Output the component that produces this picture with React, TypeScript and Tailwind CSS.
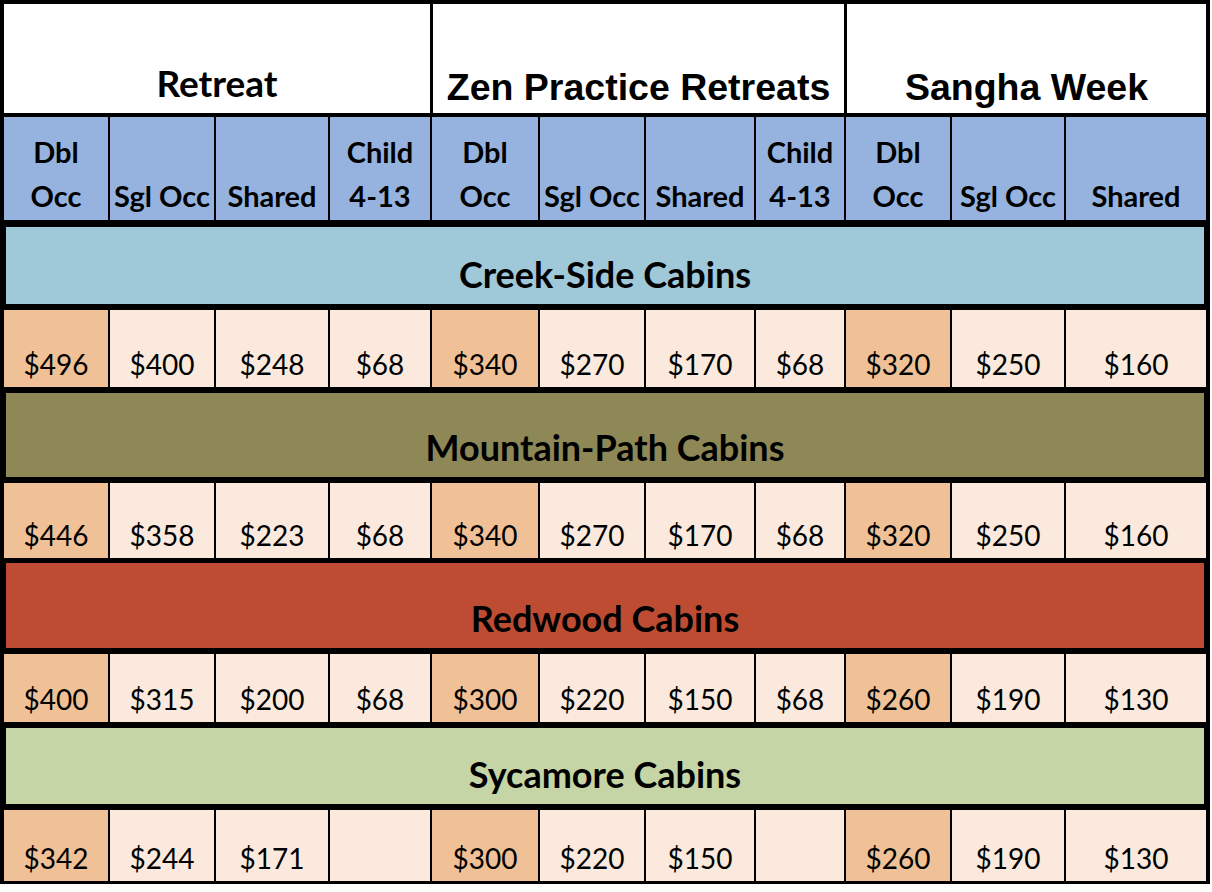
const lato = { fontFamily: "Lato, 'Noto Sans', sans-serif" };

const cols =
  "grid grid-cols-[104px_104px_112px_100px_106px_104px_108px_88px_104px_112px_140px] gap-x-[2px] pl-[4px] pr-[4px]";

const subHeads: string[][] = [
  ["Dbl", "Occ"],
  ["Sgl Occ"],
  ["Shared"],
  ["Child", "4-13"],
  ["Dbl", "Occ"],
  ["Sgl Occ"],
  ["Shared"],
  ["Child", "4-13"],
  ["Dbl", "Occ"],
  ["Sgl Occ"],
  ["Shared"],
];

// which columns are the "Dbl Occ" ones (darker peach)
const peach = [0, 4, 8];

type Cabin = {
  name: string;
  band: string;
  bandH: string;
  rowH: string;
  gapTop: string;
  prices: string[];
};

const cabins: Cabin[] = [
  {
    name: "Creek-Side Cabins",
    band: "bg-[#9fc8d9]",
    bandH: "h-[77px]",
    rowH: "h-[77px]",
    gapTop: "mt-[7px]",
    prices: ["$496", "$400", "$248", "$68", "$340", "$270", "$170", "$68", "$320", "$250", "$160"],
  },
  {
    name: "Mountain-Path Cabins",
    band: "bg-[#8e8857]",
    bandH: "h-[84px]",
    rowH: "h-[75px]",
    gapTop: "mt-[6px]",
    prices: ["$446", "$358", "$223", "$68", "$340", "$270", "$170", "$68", "$320", "$250", "$160"],
  },
  {
    name: "Redwood Cabins",
    band: "bg-[#be4c33]",
    bandH: "h-[85px]",
    rowH: "h-[68px]",
    gapTop: "mt-[5px]",
    prices: ["$400", "$315", "$200", "$68", "$300", "$220", "$150", "$68", "$260", "$190", "$130"],
  },
  {
    name: "Sycamore Cabins",
    band: "bg-[#c5d5a5]",
    bandH: "h-[76px]",
    rowH: "h-[71px]",
    gapTop: "mt-[6px]",
    prices: ["$342", "$244", "$171", "", "$300", "$220", "$150", "", "$260", "$190", "$130"],
  },
];

function CabinBlock({ cabin }: { cabin: Cabin }) {
  return (
    <>
      <div className={`${cabin.gapTop} px-[6px]`}>
        <div
          className={`${cabin.bandH} ${cabin.band} flex items-end justify-center pb-[12px] text-[36px] font-bold leading-none text-black`}
          style={lato}
        >
          {cabin.name}
        </div>
      </div>
      <div className={`mt-[6px] ${cols} ${cabin.rowH}`}>
        {cabin.prices.map((p, i) => (
          <div
            key={i}
            className={`flex items-end justify-center pb-[9px] text-[28px] leading-none text-black ${
              peach.includes(i) ? "bg-[#f0c196]" : "bg-[#fae9dc]"
            }`}
            style={lato}
          >
            {p}
          </div>
        ))}
      </div>
    </>
  );
}

export default function App() {
  return (
    <div className="min-h-screen bg-white">
      <div className="flex w-[1210px] flex-col bg-black pb-[3px] pt-[4px]">
        <div className="grid h-[109px] grid-cols-[426px_411px_359px] gap-x-[3px] px-[4px]">
          <div
            className="flex items-end justify-center bg-white pb-[12px] text-[37px] font-bold leading-none text-black"
            style={lato}
          >
            Retreat
          </div>
          <div className="flex items-end justify-center bg-white pb-[7px] font-['Liberation_Sans',Arial,sans-serif] text-[37.5px] font-bold leading-none text-black">
            Zen Practice Retreats
          </div>
          <div className="flex items-end justify-center bg-white pb-[7px] font-['Liberation_Sans',Arial,sans-serif] text-[37.5px] font-bold leading-none text-black">
            Sangha Week
          </div>
        </div>

        <div className={`mt-[4px] h-[103px] ${cols}`}>
          {subHeads.map((lines, i) => (
            <div
              key={i}
              className="flex flex-col items-center justify-end bg-[#95b3de] pb-[2px] text-[29px] font-bold leading-[44px] text-black"
              style={lato}
            >
              {lines.map((l) => (
                <span key={l} className="whitespace-nowrap">
                  {l}
                </span>
              ))}
            </div>
          ))}
        </div>

        {cabins.map((c) => (
          <CabinBlock key={c.name} cabin={c} />
        ))}
      </div>
    </div>
  );
}
